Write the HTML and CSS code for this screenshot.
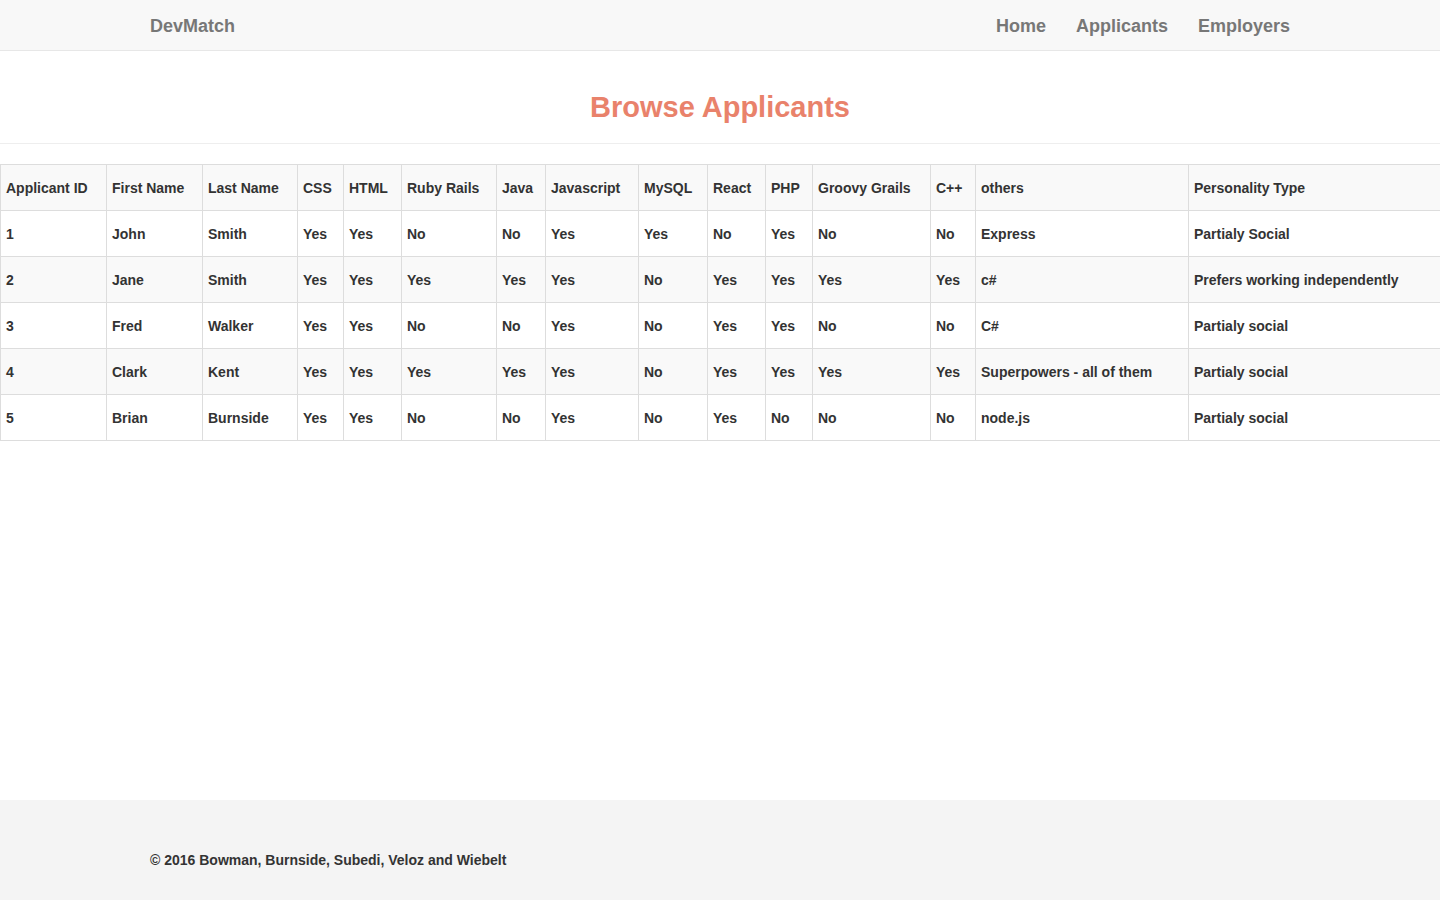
FILE: index.html
```html
<!DOCTYPE html>
<html lang="en">
<head>
<meta charset="utf-8">
<title>DevMatch - Browse Applicants</title>
<link rel="stylesheet" href="styles.css">
</head>
<body>
<nav class="navbar">
  <div class="container nav-inner">
    <a class="brand" href="#">DevMatch</a>
    <ul class="nav-links">
      <li><a href="#">Home</a></li>
      <li><a href="#">Applicants</a></li>
      <li><a href="#">Employers</a></li>
    </ul>
  </div>
</nav>
<main class="main">
  <h1 class="title">Browse Applicants</h1>
  <hr class="rule">
  <table class="grid">
    <colgroup>
      <col class="c-id"><col class="c-first"><col class="c-last"><col class="c-css"><col class="c-html"><col class="c-ruby"><col class="c-java"><col class="c-js"><col class="c-mysql"><col class="c-react"><col class="c-php"><col class="c-groovy"><col class="c-cpp"><col class="c-others"><col class="c-pers">
    </colgroup>
    <thead>
      <tr><th>Applicant ID</th><th>First Name</th><th>Last Name</th><th>CSS</th><th>HTML</th><th>Ruby Rails</th><th>Java</th><th>Javascript</th><th>MySQL</th><th>React</th><th>PHP</th><th>Groovy Grails</th><th>C++</th><th>others</th><th>Personality Type</th></tr>
    </thead>
    <tbody>
      <tr><td>1</td><td>John</td><td>Smith</td><td>Yes</td><td>Yes</td><td>No</td><td>No</td><td>Yes</td><td>Yes</td><td>No</td><td>Yes</td><td>No</td><td>No</td><td>Express</td><td>Partialy Social</td></tr>
      <tr><td>2</td><td>Jane</td><td>Smith</td><td>Yes</td><td>Yes</td><td>Yes</td><td>Yes</td><td>Yes</td><td>No</td><td>Yes</td><td>Yes</td><td>Yes</td><td>Yes</td><td>c#</td><td>Prefers working independently</td></tr>
      <tr><td>3</td><td>Fred</td><td>Walker</td><td>Yes</td><td>Yes</td><td>No</td><td>No</td><td>Yes</td><td>No</td><td>Yes</td><td>Yes</td><td>No</td><td>No</td><td>C#</td><td>Partialy social</td></tr>
      <tr><td>4</td><td>Clark</td><td>Kent</td><td>Yes</td><td>Yes</td><td>Yes</td><td>Yes</td><td>Yes</td><td>No</td><td>Yes</td><td>Yes</td><td>Yes</td><td>Yes</td><td>Superpowers - all of them</td><td>Partialy social</td></tr>
      <tr><td>5</td><td>Brian</td><td>Burnside</td><td>Yes</td><td>Yes</td><td>No</td><td>No</td><td>Yes</td><td>No</td><td>Yes</td><td>No</td><td>No</td><td>No</td><td>node.js</td><td>Partialy social</td></tr>
    </tbody>
  </table>
</main>
<footer class="footer">
  <div class="container">
    <p class="copy">© 2016 Bowman, Burnside, Subedi, Veloz and Wiebelt</p>
  </div>
</footer>
</body>
</html>
```
FILE: styles.css
```css
* { box-sizing: border-box; }
html, body { margin: 0; padding: 0; }
body {
  font-family: "Liberation Sans", Arial, Helvetica, sans-serif;
  font-size: 14px;
  font-weight: bold;
  color: #333;
  background: #fff;
  min-height: 100vh;
  display: flex;
  flex-direction: column;
}
a { text-decoration: none; }

.container {
  width: 1140px;
  margin: 0 auto;
}

.navbar {
  height: 51px;
  background: #f8f8f8;
  border-bottom: 1px solid #e7e7e7;
}
.nav-inner {
  height: 50px;
  padding-top: 2px;
  display: flex;
  align-items: center;
  justify-content: space-between;
}
.brand {
  color: #777;
  font-size: 18px;
  font-weight: bold;
}
.nav-links {
  list-style: none;
  margin: 0;
  padding: 0;
  display: flex;
  gap: 30px;
}
.nav-links a {
  color: #777;
  font-size: 18px;
  font-weight: bold;
}

.main { flex: 1; }

.title {
  margin: 38px 0 0;
  text-align: center;
  color: #e9826b;
  font-size: 29px;
  line-height: 36px;
  font-weight: bold;
}
.rule {
  margin: 18px 0 20px;
  border: 0;
  border-top: 1px solid #eee;
}

.grid {
  width: 100%;
  border-collapse: collapse;
  table-layout: fixed;
}
.grid th, .grid td {
  border: 1px solid #ddd;
  text-align: left;
  padding: 0 5px;
  height: 46px;
  line-height: 20px;
  font-size: 14px;
  font-weight: bold;
  color: #333;
  vertical-align: middle;
  white-space: nowrap;
}
.grid thead tr { background: #f9f9f9; }
.grid tbody tr:nth-child(even) { background: #f9f9f9; }

.c-id { width: 106px; }
.c-first { width: 96px; }
.c-last { width: 95px; }
.c-css { width: 46px; }
.c-html { width: 58px; }
.c-ruby { width: 95px; }
.c-java { width: 49px; }
.c-js { width: 93px; }
.c-mysql { width: 69px; }
.c-react { width: 58px; }
.c-php { width: 47px; }
.c-groovy { width: 118px; }
.c-cpp { width: 45px; }
.c-others { width: 213px; }
.c-pers { width: 252px; }

.footer {
  height: 100px;
  background: #f4f4f4;
}
.copy {
  margin: 0;
  padding-top: 50px;
  line-height: 20px;
  font-size: 14px;
  font-weight: bold;
  color: #333;
}
```
